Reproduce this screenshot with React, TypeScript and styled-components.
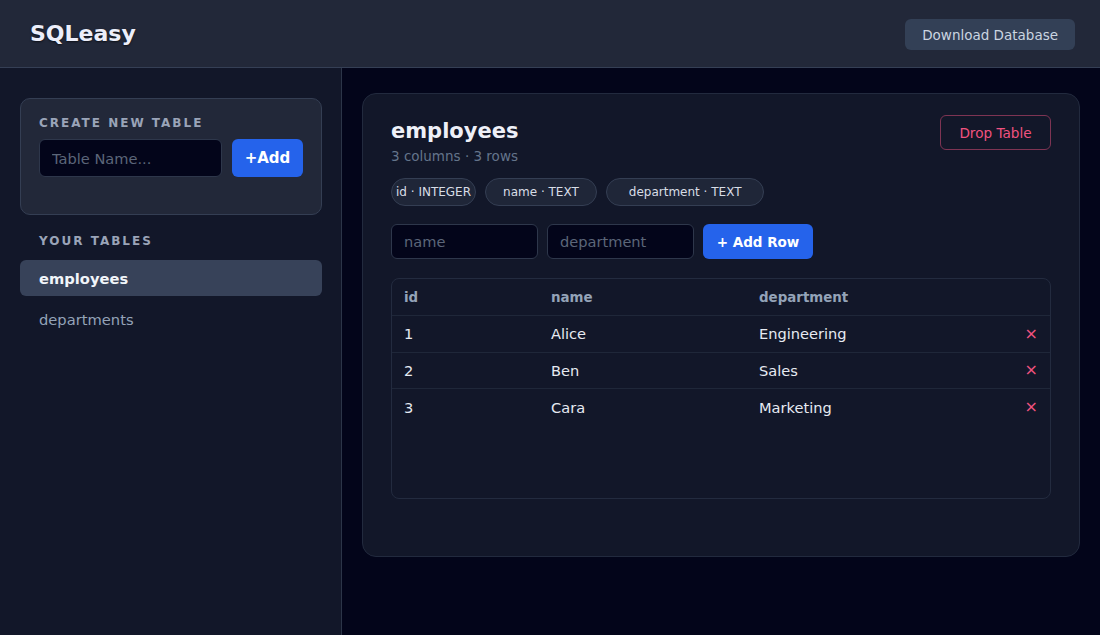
import React from "react";
import styled, { createGlobalStyle } from "styled-components";

const Global = createGlobalStyle`
  * { box-sizing: border-box; }
  html, body { margin: 0; padding: 0; background: #03051a; }
  body { font-family: "DejaVu Sans", Verdana, sans-serif; color: #e2e8f0; }
  input, button { font-family: inherit; }
`;

const Page = styled.div`
  display: flex;
  flex-direction: column;
  height: 635px;
  width: 1100px;
  overflow: hidden;
`;

const Header = styled.header`
  height: 68px;
  flex: none;
  display: flex;
  align-items: center;
  justify-content: space-between;
  padding: 0 25px 0 30px;
  background: #222839;
  border-bottom: 1px solid #353f55;
`;

const Logo = styled.h1`
  margin: 0;
  font-size: 22px;
  font-weight: 700;
  color: #eceefa;
  text-shadow: 0 1px 2px rgba(0, 0, 0, 0.6);
`;

const GhostButton = styled.button`
  height: 31px;
  margin-top: 2px;
  padding: 0 17px;
  border: none;
  border-radius: 6px;
  background: #334056;
  color: #cbd5e1;
  font-size: 13.5px;
`;

const Body = styled.div`
  flex: 1;
  display: flex;
  min-height: 0;
`;

const Sidebar = styled.aside`
  width: 342px;
  flex: none;
  padding: 30px 19px 0 20px;
  background: #121729;
  border-right: 1px solid #2c3548;
  display: flex;
  flex-direction: column;
`;

const CreateCard = styled.div`
  background: #222839;
  border: 1px solid #343e53;
  border-radius: 10px;
  padding: 16px 18px 37px;
`;

const SectionLabel = styled.div<{ $indent?: boolean }>`
  font-size: 12px;
  font-weight: 700;
  letter-spacing: 2px;
  line-height: 16px;
  color: #9aa4b8;
  text-transform: uppercase;
  padding-left: ${(p) => (p.$indent ? "19px" : "0")};
`;

const CreateRow = styled.div`
  display: flex;
  gap: 10px;
  margin-top: 8px;
`;

const TextInput = styled.input<{ $w?: number; $h: number }>`
  ${(p) => (p.$w ? `width: ${p.$w}px;` : "flex: 1; min-width: 0;")}
  height: ${(p) => p.$h}px;
  padding: 0 12px;
  background: #03051a;
  border: 1px solid #2e374b;
  border-radius: 6px;
  color: #e2e8f0;
  font-size: 14.6px;
  outline: none;
  &::placeholder { color: #5c6679; }
`;

const PrimaryButton = styled.button<{ $w: number; $h: number; $size: number }>`
  width: ${(p) => p.$w}px;
  height: ${(p) => p.$h}px;
  flex: none;
  border: none;
  border-radius: 6px;
  background: #2563eb;
  color: #ffffff;
  font-weight: 700;
  font-size: ${(p) => p.$size}px;
`;

const TablesSection = styled.div`
  margin-top: 18px;
  display: flex;
  flex-direction: column;
`;

const TableList = styled.div`
  margin-top: 11px;
  display: flex;
  flex-direction: column;
  gap: 5px;
`;

const TableItem = styled.div<{ $active?: boolean }>`
  height: 36px;
  display: flex;
  align-items: center;
  padding-left: 19px;
  border-radius: 6px;
  font-size: 14.7px;
  background: ${(p) => (p.$active ? "#374259" : "transparent")};
  color: ${(p) => (p.$active ? "#f1f5f9" : "#94a3b8")};
  font-weight: ${(p) => (p.$active ? 700 : 400)};
`;

const Main = styled.main`
  flex: 1;
  padding: 25px 20px 0 20px;
  background: #03051a;
`;

const Panel = styled.section`
  height: 464px;
  background: #121729;
  border: 1px solid #222a3e;
  border-radius: 14px;
  padding: 21px 28px 0 28px;
  display: flex;
  flex-direction: column;
`;

const TitleRow = styled.div`
  display: flex;
  justify-content: space-between;
  align-items: flex-start;
`;

const TitleBlock = styled.div`
  display: flex;
  flex-direction: column;
  padding-top: 1px;
`;

const Title = styled.h2`
  margin: 0;
  font-size: 21px;
  line-height: 30px;
  font-weight: 700;
  color: #eef0f8;
`;

const Subtitle = styled.div`
  font-size: 13.5px;
  line-height: 18px;
  color: #64748b;
  margin-top: 1px;
`;

const DangerButton = styled.button`
  height: 35px;
  width: 111px;
  border: 1.5px solid #7e3453;
  border-radius: 6px;
  background: transparent;
  color: #f0527f;
  font-size: 13.6px;
`;

const ChipRow = styled.div`
  display: flex;
  gap: 9px;
  margin-top: 13px;
`;

const Chip = styled.span<{ $pad: number }>`
  height: 28px;
  display: inline-flex;
  align-items: center;
  padding: 0 ${(p) => p.$pad}px;
  background: #1f2638;
  border: 1px solid #343e53;
  border-radius: 14px;
  font-size: 12px;
  color: #d8dde6;
  white-space: nowrap;
`;

const InsertRow = styled.div`
  display: flex;
  gap: 9px;
  margin-top: 18px;
`;

const DataTable = styled.div`
  margin-top: 19px;
  height: 221px;
  border: 1px solid #232b3f;
  border-radius: 8px;
  overflow: hidden;
`;

const GridRow = styled.div<{ $head?: boolean; $last?: boolean }>`
  display: grid;
  grid-template-columns: 147px 208px 1fr 50px;
  align-items: center;
  height: ${(p) => (p.$head ? "37px" : "36.5px")};
  padding-left: 12px;
  border-bottom: ${(p) => (p.$last ? "none" : "1px solid #1f2739")};
  font-size: ${(p) => (p.$head ? "13.4px" : "14.6px")};
  font-weight: ${(p) => (p.$head ? 700 : 400)};
  color: ${(p) => (p.$head ? "#94a3b8" : "#e6eaf2")};
`;

const DeleteCell = styled.span`
  justify-self: end;
  padding-right: 12px;
  color: #f0527f;
  font-size: 16px;
  line-height: 1;
`;

const rows = [
  { id: 1, name: "Alice", department: "Engineering" },
  { id: 2, name: "Ben", department: "Sales" },
  { id: 3, name: "Cara", department: "Marketing" },
];

const chips = [
  { label: "id · INTEGER", pad: 4 },
  { label: "name · TEXT", pad: 17 },
  { label: "department · TEXT", pad: 22 },
];

export default function App() {
  return (
    <Page>
      <Global />
      <Header>
        <Logo>SQLeasy</Logo>
        <GhostButton>Download Database</GhostButton>
      </Header>
      <Body>
        <Sidebar>
          <CreateCard>
            <SectionLabel>Create New Table</SectionLabel>
            <CreateRow>
              <TextInput $h={38} placeholder="Table Name..." />
              <PrimaryButton $w={71} $h={38} $size={15}>+Add</PrimaryButton>
            </CreateRow>
          </CreateCard>
          <TablesSection>
            <SectionLabel $indent>Your Tables</SectionLabel>
            <TableList>
              <TableItem $active>employees</TableItem>
              <TableItem>departments</TableItem>
            </TableList>
          </TablesSection>
        </Sidebar>
        <Main>
          <Panel>
            <TitleRow>
              <TitleBlock>
                <Title>employees</Title>
                <Subtitle>3 columns · 3 rows</Subtitle>
              </TitleBlock>
              <DangerButton>Drop Table</DangerButton>
            </TitleRow>
            <ChipRow>
              {chips.map((c) => (
                <Chip key={c.label} $pad={c.pad}>{c.label}</Chip>
              ))}
            </ChipRow>
            <InsertRow>
              <TextInput $w={147} $h={35} placeholder="name" />
              <TextInput $w={147} $h={35} placeholder="department" />
              <PrimaryButton $w={110} $h={35} $size={13.5}>+ Add Row</PrimaryButton>
            </InsertRow>
            <DataTable>
              <GridRow $head>
                <span>id</span>
                <span>name</span>
                <span>department</span>
                <span />
              </GridRow>
              {rows.map((r, i) => (
                <GridRow key={r.id} $last={i === rows.length - 1}>
                  <span>{r.id}</span>
                  <span>{r.name}</span>
                  <span>{r.department}</span>
                  <DeleteCell>×</DeleteCell>
                </GridRow>
              ))}
            </DataTable>
          </Panel>
        </Main>
      </Body>
    </Page>
  );
}
